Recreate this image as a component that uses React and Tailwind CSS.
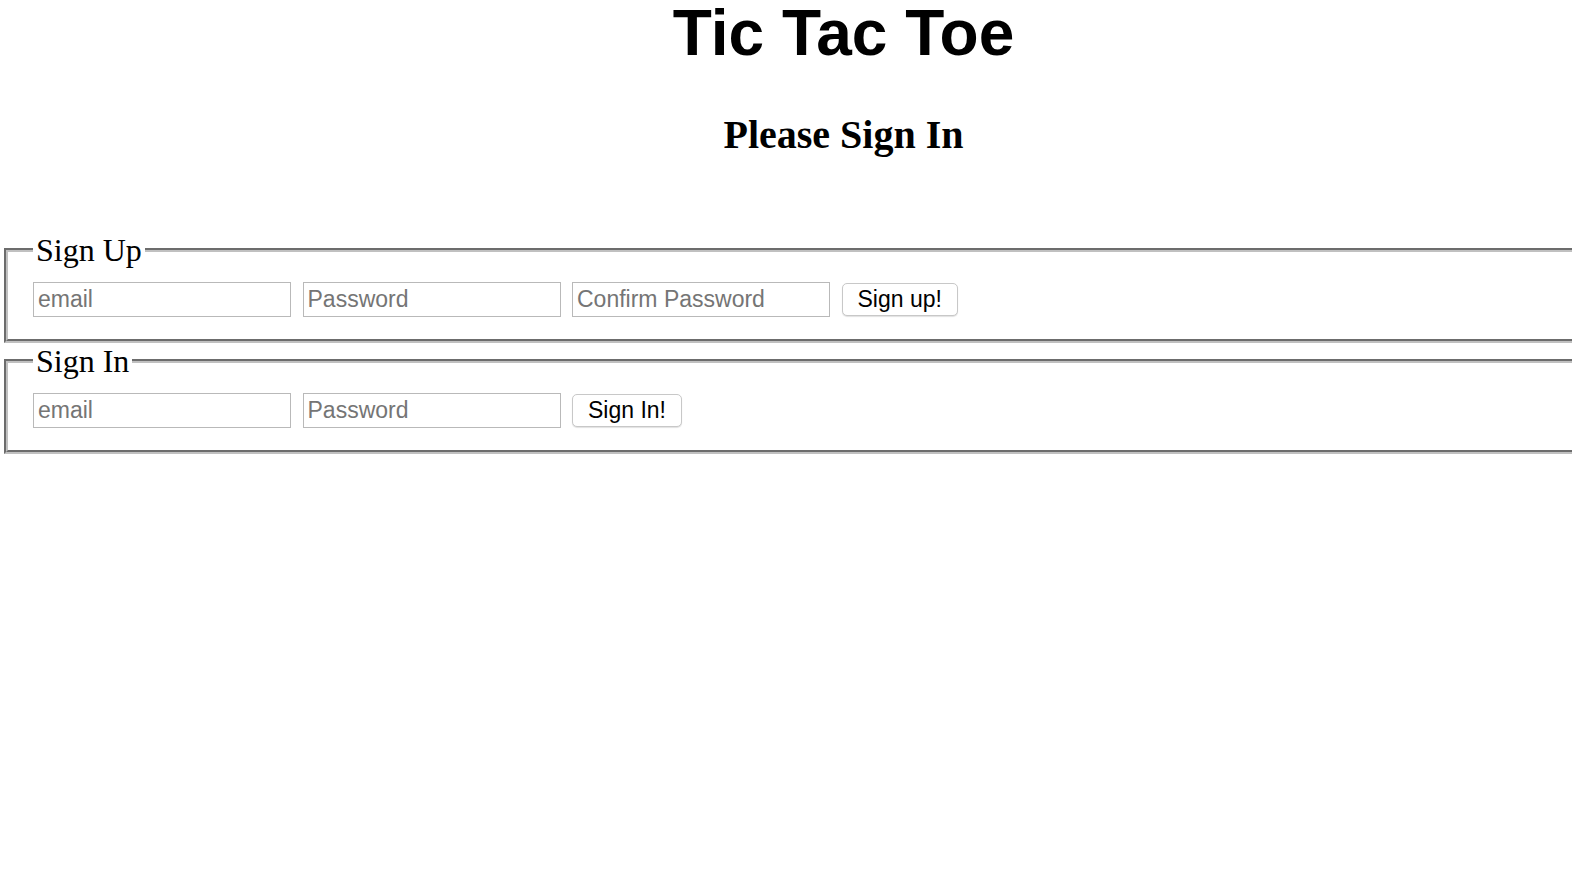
import React, { useState } from 'react';

const inputCls =
  'w-[258px] h-[35px] border border-[#b9b9b9] bg-white px-[4px] text-[23px] text-black placeholder:text-[#757575] outline-none';
const buttonCls =
  'h-[33px] px-[15px] rounded-[5px] border border-[#c8c8c8] bg-white text-[23px] leading-[31px] text-black shadow-[0_1px_1px_rgba(0,0,0,0.12)]';

function Box({ title, children }) {
  return (
    <fieldset className="mx-[4px] border-4 [border-style:groove] border-[#c0c0c0] pl-[25px] pt-[14px] pb-[22px]">
      <legend className="px-[3px] text-[32px] leading-[36px] font-['Liberation_Serif',serif] text-black">{title}</legend>
      <div className="flex items-center gap-[11.5px] font-['Liberation_Sans',Arial,sans-serif]">{children}</div>
    </fieldset>
  );
}

export default function App() {
  const [upEmail, setUpEmail] = useState('');
  const [upPass, setUpPass] = useState('');
  const [upConfirm, setUpConfirm] = useState('');
  const [inEmail, setInEmail] = useState('');
  const [inPass, setInPass] = useState('');

  return (
    <div className="min-h-screen bg-white overflow-hidden">
      <div className="w-[1687px]">
        <h1 className="text-center text-[64px] leading-[66px] font-bold font-['Liberation_Sans',Arial,sans-serif] text-black">
          Tic Tac Toe
        </h1>
        <h3 className="mt-[46px] text-center text-[40px] leading-[46px] font-bold font-['Liberation_Serif',serif] text-black">
          Please Sign In
        </h3>
        <div className="mt-[74px]">
          <Box title="Sign Up">
            <input className={inputCls} placeholder="email" value={upEmail} onChange={(e) => setUpEmail(e.target.value)} />
            <input className={inputCls} type="password" placeholder="Password" value={upPass} onChange={(e) => setUpPass(e.target.value)} />
            <input className={inputCls} type="password" placeholder="Confirm Password" value={upConfirm} onChange={(e) => setUpConfirm(e.target.value)} />
            <button className={buttonCls}>Sign up!</button>
          </Box>
          <Box title="Sign In">
            <input className={inputCls} placeholder="email" value={inEmail} onChange={(e) => setInEmail(e.target.value)} />
            <input className={inputCls} type="password" placeholder="Password" value={inPass} onChange={(e) => setInPass(e.target.value)} />
            <button className={buttonCls}>Sign In!</button>
          </Box>
        </div>
      </div>
    </div>
  );
}
